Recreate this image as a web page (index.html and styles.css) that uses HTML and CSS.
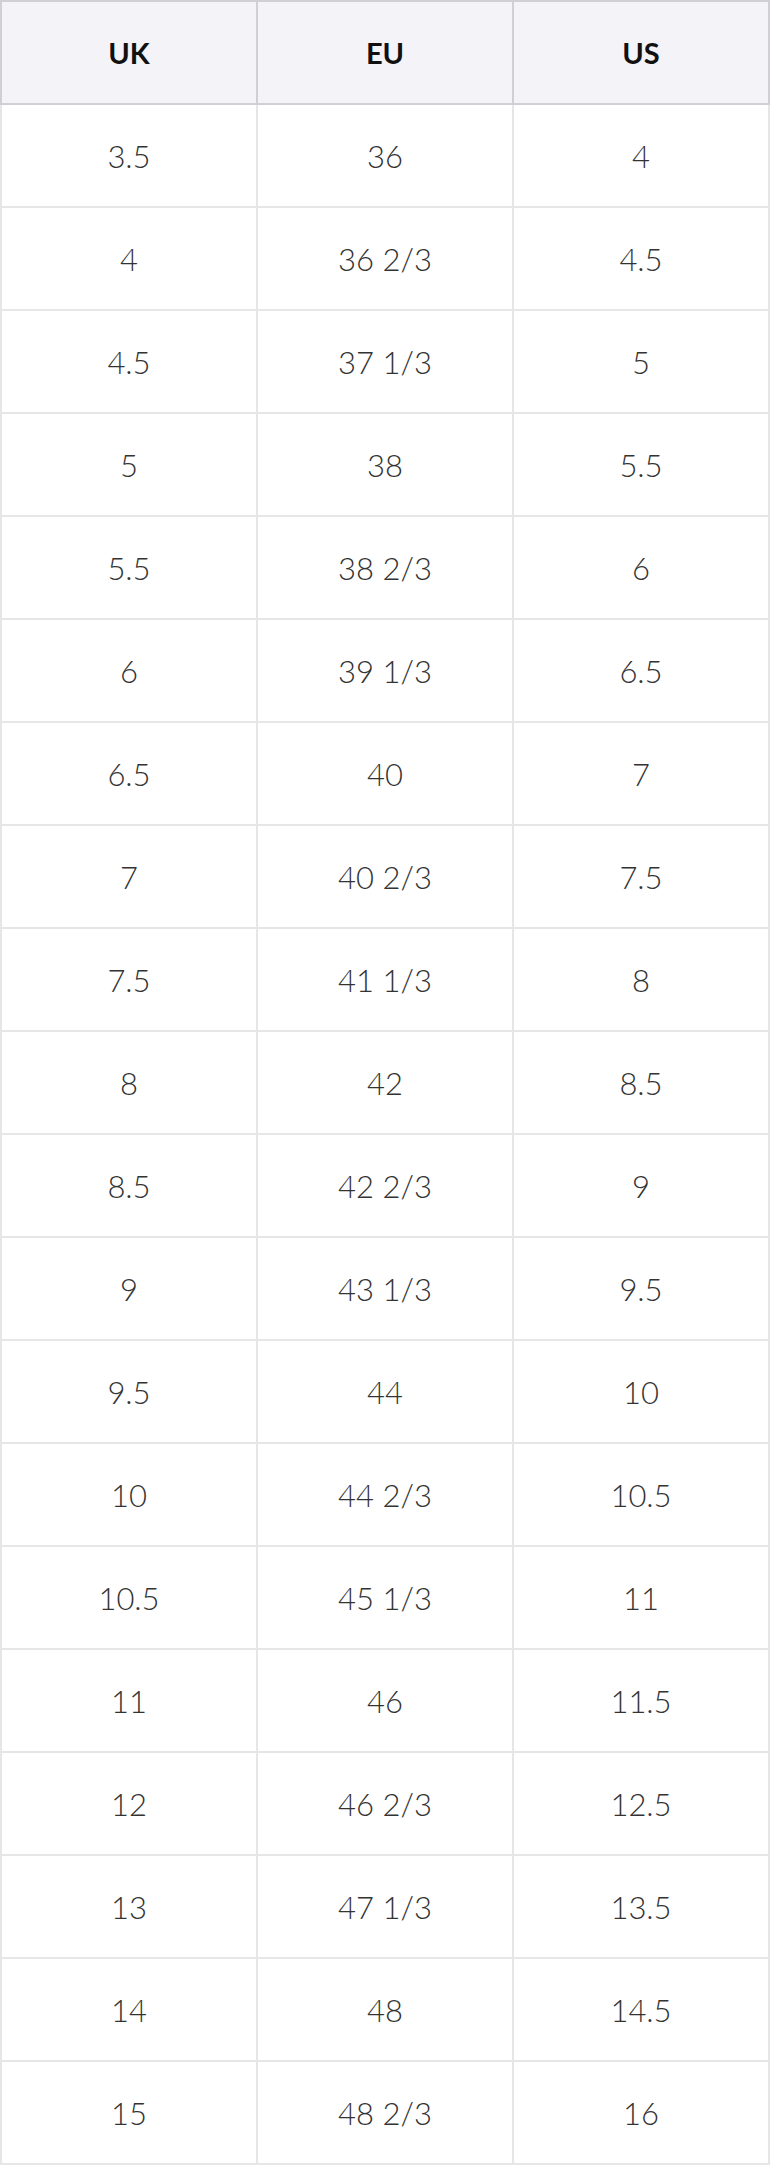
FILE: index.html
```html
<!DOCTYPE html>
<html lang="en">
<head>
<meta charset="utf-8">
<title>Size chart</title>
<link rel="stylesheet" href="styles.css">
</head>
<body>
<table class="sizes">
  <thead>
    <tr><th>UK</th><th>EU</th><th>US</th></tr>
  </thead>
  <tbody>
    <tr><td>3.5</td><td>36</td><td>4</td></tr>
    <tr><td>4</td><td>36 2/3</td><td>4.5</td></tr>
    <tr><td>4.5</td><td>37 1/3</td><td>5</td></tr>
    <tr><td>5</td><td>38</td><td>5.5</td></tr>
    <tr><td>5.5</td><td>38 2/3</td><td>6</td></tr>
    <tr><td>6</td><td>39 1/3</td><td>6.5</td></tr>
    <tr><td>6.5</td><td>40</td><td>7</td></tr>
    <tr><td>7</td><td>40 2/3</td><td>7.5</td></tr>
    <tr><td>7.5</td><td>41 1/3</td><td>8</td></tr>
    <tr><td>8</td><td>42</td><td>8.5</td></tr>
    <tr><td>8.5</td><td>42 2/3</td><td>9</td></tr>
    <tr><td>9</td><td>43 1/3</td><td>9.5</td></tr>
    <tr><td>9.5</td><td>44</td><td>10</td></tr>
    <tr><td>10</td><td>44 2/3</td><td>10.5</td></tr>
    <tr><td>10.5</td><td>45 1/3</td><td>11</td></tr>
    <tr><td>11</td><td>46</td><td>11.5</td></tr>
    <tr><td>12</td><td>46 2/3</td><td>12.5</td></tr>
    <tr><td>13</td><td>47 1/3</td><td>13.5</td></tr>
    <tr><td>14</td><td>48</td><td>14.5</td></tr>
    <tr><td>15</td><td>48 2/3</td><td>16</td></tr>
  </tbody>
</table>
</body>
</html>
```

FILE: styles.css
```css
html, body {
  margin: 0;
  padding: 0;
  background: #ffffff;
}

.sizes {
  width: 770px;
  border-collapse: collapse;
  table-layout: fixed;
  font-family: Lato, "Open Sans", sans-serif;
}

.sizes th,
.sizes td {
  height: 101px;
  padding: 0;
  text-align: center;
  vertical-align: middle;
  border: 2px solid #e6e6e8;
}

.sizes th {
  background: #f3f3f8;
  color: #111111;
  font-weight: 700;
  font-size: 29px;
  border-color: #cfcfd5;
}

.sizes td {
  color: #333333;
  font-weight: 300;
  font-size: 31px;
}
```
